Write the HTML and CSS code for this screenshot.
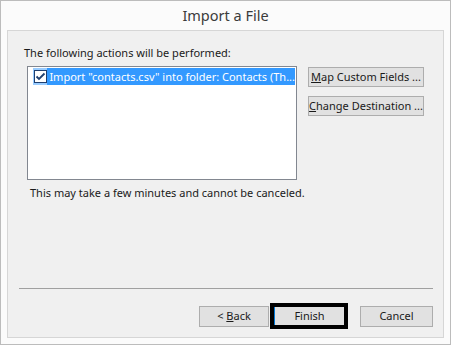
FILE: index.html
```html
<!DOCTYPE html>
<html lang="en">
<head>
  <meta charset="UTF-8">
  <title>Import a File</title>
  <link rel="stylesheet" href="styles.css">
</head>
<body>
  <div class="window">
    <div class="title">Import a File</div>

    <div class="panel">
      <div class="label">The following actions will be performed:</div>

      <div class="actions">
        <div class="listbox">
          <div class="item selected">
            <span class="check">
              <svg width="13" height="13" viewBox="0 0 13 13">
                <rect x="0.5" y="0.5" width="12" height="12" fill="#ffffff" stroke="#1f3f6f"/>
                <path d="M2.5 6.5 L5 9 L10.5 3.5" fill="none" stroke="#1f3f6f" stroke-width="1.8"/>
              </svg>
            </span>
            <span class="item-text">Import "contacts.csv" into folder: Contacts (Th...</span>
          </div>
        </div>

        <div class="side-buttons">
          <button class="btn wide"><u>M</u>ap Custom Fields ...</button>
          <button class="btn wide"><u>C</u>hange Destination ...</button>
        </div>
      </div>

      <div class="note">This may take a few minutes and cannot be canceled.</div>

      <div class="spacer"></div>
      <div class="separator"></div>

      <!-- wizard navigation -->
      <div class="footer">
        <button class="btn back">&lt; <u>B</u>ack</button>
        <div class="focus-box">
          <button class="btn finish">Finish</button>
        </div>
        <button class="btn cancel">Cancel</button>
      </div>
    </div>
  </div>
</body>
</html>
```

FILE: styles.css
```css
* {
  box-sizing: border-box;
}
body {
  margin: 0;
  font-family: 'Noto Sans', sans-serif;
  font-size: 11px;
  color: #1a1a1a;
  background: #ffffff;
}
.window {
  width: 451px;
  height: 345px;
  border: 1px solid #bcbcbc;
  background-color: #fbfbfb;
  display: flex;
  flex-direction: column;
}
.title {
  height: 29px;
  display: flex;
  justify-content: center;
  align-items: center;
  font-size: 14.5px;
  color: #3b3b3b;
  padding-bottom: 1px;
}
.panel {
  margin: 0 6px;
  height: 308px;
  background-color: #f0f0f0;
  border: 1px solid #d6d6d6;
  display: flex;
  flex-direction: column;
  padding: 14px 10px 0 16px;
}
.label {
  height: 21px;
  line-height: 15px;
}
.actions {
  display: flex;
  align-items: flex-start;
  padding-left: 3px;
}
.listbox {
  width: 270px;
  height: 114px;
  background: #ffffff;
  border: 1px solid #828790;
  padding: 1px;
}
.item {
  display: flex;
  align-items: center;
  height: 17px;
  width: 262px;
  margin-left: 4px;
  white-space: nowrap;
  overflow: hidden;
}
.selected {
  background-color: #3399ff;
  color: #ffffff;
}
.check {
  width: 16px;
  height: 17px;
  background-color: #99ccff;
  display: flex;
  justify-content: center;
  align-items: center;
  margin-right: 2px;
}
.check svg {
  display: block;
}
.side-buttons {
  display: flex;
  flex-direction: column;
  gap: 9px;
  margin-left: 11px;
  padding-top: 1px;
}
.btn {
  font-family: 'Noto Sans', sans-serif;
  font-size: 11px;
  color: #1a1a1a;
  background-color: #e1e1e1;
  border: 1px solid #adadad;
  padding: 0;
  height: 20px;
  line-height: 16px;
}
.wide {
  width: 116px;
}
.note {
  margin-top: 5px;
  padding-left: 6px;
  line-height: 15px;
}
.spacer {
  flex: 1;
}
.separator {
  height: 1px;
  background-color: #a0a0a0;
  margin: 0 0 14px -5px;
}
.footer {
  display: flex;
  justify-content: flex-end;
  align-items: center;
  height: 26px;
  margin-bottom: 8px;
}
.back {
  width: 70px;
  height: 21px;
}
.focus-box {
  margin-left: 1px;
  width: 78px;
  height: 26px;
  border: 4px solid #000000;
  display: flex;
}
.finish {
  width: 100%;
  height: 100%;
  border: none;
  border-left: 1px solid #0078d7;
  background-color: #e1e1e1;
}
.cancel {
  width: 73px;
  height: 21px;
  margin-left: 12px;
}
```
